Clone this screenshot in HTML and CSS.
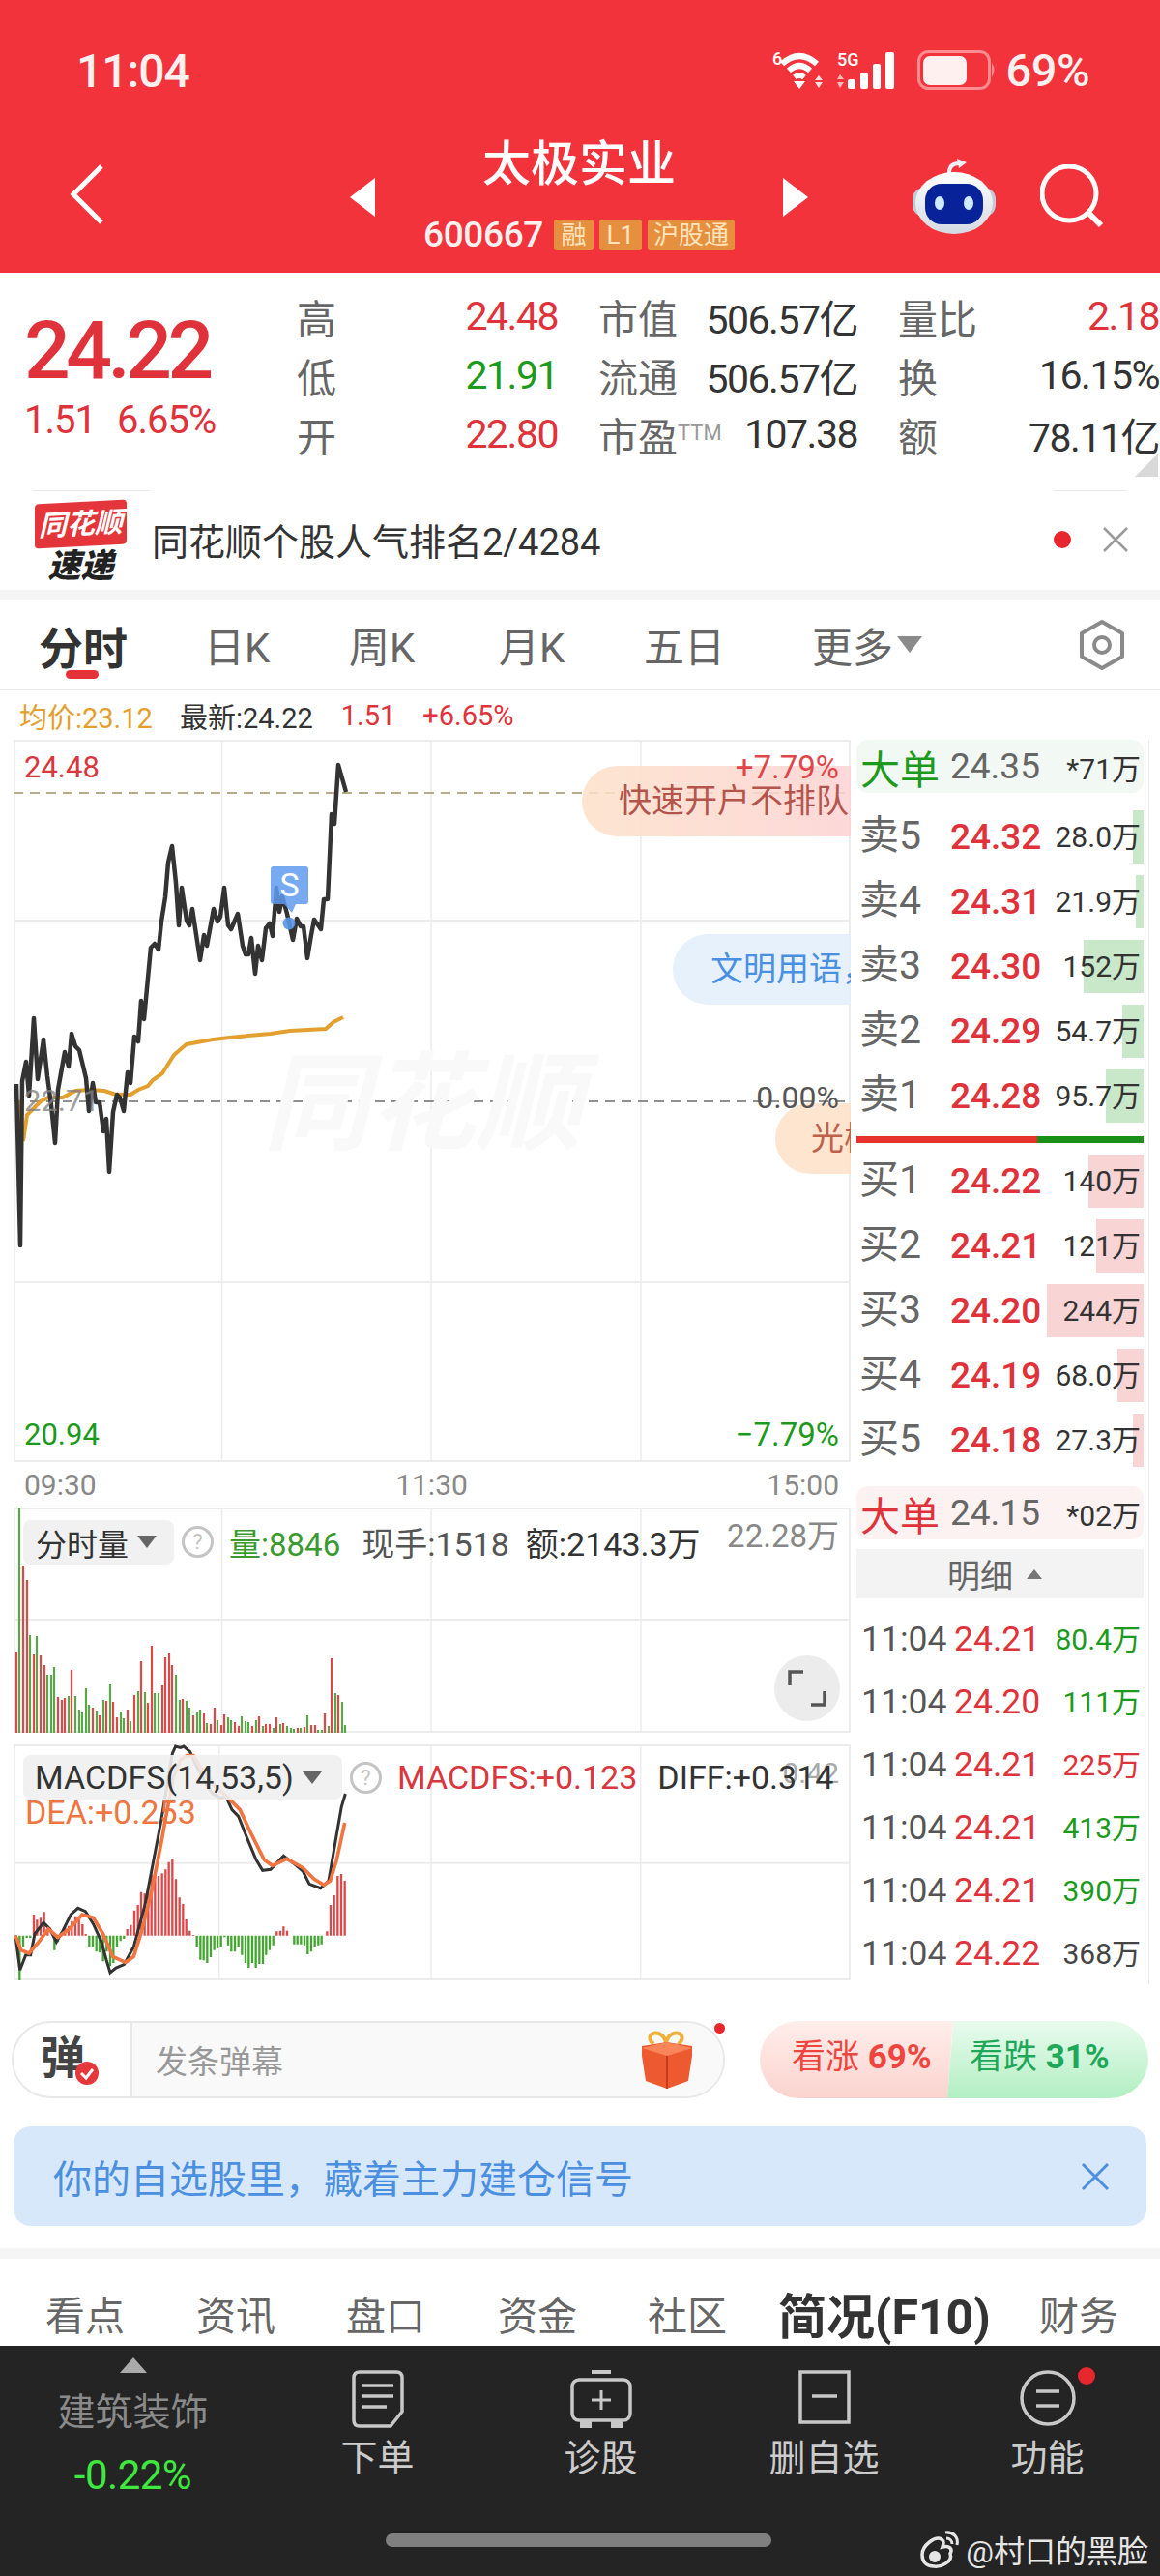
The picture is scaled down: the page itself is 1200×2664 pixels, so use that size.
FILE: index.html
```html
<!DOCTYPE html>
<html lang="zh">
<head>
    <meta charset="UTF-8">
    <title>太极实业</title>
    <link rel="stylesheet" href="styles.css">
</head>
<body>
<div class="page">
    <header class="header">
        <div class="status-bar">
            <span class="clock">11:04</span>
            <div class="status-icons">
                <svg class="wifi" width="56" height="44" viewBox="0 0 56 44">
                    <text x="0" y="16" class="tiny">6</text>
                    <path d="M10 15 Q28 -1 46 15M17 22 Q28 12 39 22M23 29 Q28 25 33 29" fill="none" stroke="#fff" stroke-width="6"/>
                    <path d="M22 33 L34 33 L28 41 Z" fill="#fff"/>
                    <path d="M48 27 L52 32 L44 32 Z M44 34 L52 34 L48 40 Z" fill="#fde0e0"/>
                </svg>
                <svg class="signal" width="66" height="44" viewBox="0 0 66 44">
                    <text x="0" y="17" class="tiny">5G</text>
                    <path d="M3 26 L7 31 L0 31 Z M0 34 L7 34 L3 40 Z" fill="#fbb"/>
                    <rect x="11" y="31" width="8" height="10" rx="2" fill="#fff"/>
                    <rect x="24" y="24" width="8" height="17" rx="2" fill="#fff"/>
                    <rect x="37" y="15" width="8" height="26" rx="2" fill="#fff"/>
                    <rect x="50" y="3" width="9" height="38" rx="2" fill="#fff"/>
                </svg>
                <svg class="battery" width="82" height="42" viewBox="0 0 82 42">
                    <rect x="1.5" y="1.5" width="73" height="38" rx="10" fill="none" stroke="#fb8c8f" stroke-width="3"/>
                    <rect x="6" y="6" width="45" height="30" rx="7" fill="#fff0f0"/>
                    <path d="M77 13 Q82 20 77 28 Z" fill="#fb8c8f"/>
                </svg>
                <span class="battery-text">69%</span>
            </div>
        </div>
        <div class="title-bar">
            <div class="title-left">
                <svg width="36" height="62" viewBox="0 0 36 62"><path d="M33 2 L4 31 L33 60" fill="none" stroke="#fff" stroke-width="5"/></svg>
            </div>
            <div class="title-center">
                <span class="tri-left"></span>
                <div class="stock-name">
                    <div class="name">太极实业</div>
                    <div class="code-line">
                        <span class="code">600667</span>
                        <span class="tag tag-rong">融</span>
                        <span class="tag tag-l1">L1</span>
                        <span class="tag tag-hu">沪股通</span>
                    </div>
                </div>
                <span class="tri-right"></span>
            </div>
            <div class="title-right">
                <svg width="86" height="78" viewBox="0 0 86 78">
                    <defs>
                        <linearGradient id="robotHead" x1="0" y1="0" x2="0" y2="1">
                            <stop offset="0" stop-color="#ffffff"/>
                            <stop offset="1" stop-color="#d4dae2"/>
                        </linearGradient>
                    </defs>
                    <path d="M38 15 Q38 5 48 5" fill="none" stroke="#eef0f4" stroke-width="4"/>
                    <path d="M46 0 L56 4 L48 10 Z" fill="#eef0f4"/>
                    <rect x="0" y="30" width="86" height="30" rx="12" fill="#c4cad3"/>
                    <ellipse cx="43" cy="46" rx="40" ry="32" fill="url(#robotHead)"/>
                    <rect x="13" y="26" width="60" height="42" rx="17" fill="#08229a"/>
                    <ellipse cx="28" cy="46" rx="5" ry="7" fill="#cdeaff"/>
                    <ellipse cx="58" cy="46" rx="5" ry="7" fill="#cdeaff"/>
                </svg>
                <svg width="66" height="66" viewBox="0 0 66 66"><circle cx="30" cy="30" r="28" fill="none" stroke="#fff" stroke-width="5"/><path d="M50 50 L63 63" stroke="#fff" stroke-width="6"/></svg>
            </div>
        </div>
    </header>

    <section class="quote">
        <div class="quote-price">
            <div class="last">24.22</div>
            <div class="change"><span>1.51</span><span>6.65%</span></div>
        </div>
        <div class="quote-table">
            <div class="cell"><span class="lab">高</span><span class="up">24.48</span></div>
            <div class="cell"><span class="lab">市值</span><span>506.57亿</span></div>
            <div class="cell"><span class="lab">量比</span><span class="up">2.18</span></div>
            <div class="cell"><span class="lab">低</span><span class="down">21.91</span></div>
            <div class="cell"><span class="lab">流通</span><span>506.57亿</span></div>
            <div class="cell"><span class="lab">换</span><span>16.15%</span></div>
            <div class="cell"><span class="lab">开</span><span class="up">22.80</span></div>
            <div class="cell"><span class="lab">市盈<sup>TTM</sup></span><span>107.38</span></div>
            <div class="cell"><span class="lab">额</span><span>78.11亿</span></div>
        </div>
        <span class="corner"></span>
    </section>

    <section class="news">
        <div class="news-logo">
            <span class="logo-top">同花顺</span>
            <span class="logo-bottom">速递</span>
        </div>
        <span class="news-text">同花顺个股人气排名2/4284</span>
        <span class="news-dot"></span>
        <svg class="news-close" width="28" height="26" viewBox="0 0 28 26"><path d="M2 1 L26 25 M26 1 L2 25" stroke="#9a9a9a" stroke-width="2.5"/></svg>
    </section>
    <div class="band"></div>

    <nav class="tabs">
        <span class="tab tab-on">分时</span>
        <span class="tab">日K</span>
        <span class="tab">周K</span>
        <span class="tab">月K</span>
        <span class="tab">五日</span>
        <span class="tab tab-more">更多<i class="caret"></i></span>
        <svg class="gear" width="54" height="54" viewBox="0 0 54 54">
            <path d="M27 3 L48 15 L48 39 L27 51 L6 39 L6 15 Z" fill="none" stroke="#8a8a8a" stroke-width="4" stroke-linejoin="round"/>
            <circle cx="27" cy="27" r="8" fill="none" stroke="#8a8a8a" stroke-width="4"/>
        </svg>
    </nav>

    <div class="info-row">
        <span class="avg">均价:23.12</span>
        <span class="latest">最新:24.22</span>
        <span class="up">1.51</span>
        <span class="up">+6.65%</span>
    </div>

    <div class="market">
        <div class="charts">
            <div class="price-chart">
                <svg class="price-svg" width="866" height="747" viewBox="14 765 866 747">
                    <rect x="15" y="766" width="864" height="745" fill="none" stroke="#ececec" stroke-width="2"/>
                    <path d="M229.5 765V1512M446 765V1512M663 765V1512" stroke="#ececec" stroke-width="1.5"/>
                    <path d="M14 952H880M14 1326H880" stroke="#ececec" stroke-width="2"/>
                    <path d="M14 820H880" stroke="#b9ab87" stroke-width="2" stroke-dasharray="10 7"/>
                    <path d="M14 1139H880" stroke="#8f8f8f" stroke-width="2" stroke-dasharray="10 7"/>
                    <polyline class="avg-line" points="19,1138 24,1180 28,1153 33,1148 42,1139 50,1135 65,1135 78,1128 93,1127 108,1128 120,1132 135,1132 143,1127 153,1123 158,1117 168,1110 173,1102 180,1091 188,1084 193,1080 220,1075 247,1072 280,1069 300,1066 337,1064 345,1057 355,1052"/>
                    <polyline class="price-line" points="17,1121 21,1288 23,1118 27,1098 30,1133 35,1053 39,1116 45,1075 49,1113 53,1143 57,1182 60,1127 67,1088 71,1103 74,1069 78,1082 82,1086 89,1115 92,1149 96,1120 99,1140 103,1140 107,1170 110,1157 113,1212 117,1150 121,1132 124,1135 128,1149 132,1109 135,1120 139,1072 143,1077 146,1035 149,1054 156,980 160,976 164,982 167,953 171,928 174,892 178,875 182,913 185,957 188,918 193,952 196,957 199,940 207,993 211,967 214,978 221,940 225,953 228,948 232,918 236,957 239,961 246,945 251,978 254,987 257,987 260,970 264,1007 267,978 271,993 275,960 279,955 282,968 286,918 289,943 292,927 297,945 303,972 307,950 311,958 314,958 318,991 322,967 325,951 332,961 335,930 339,930 343,842 346,852 350,791 358,819"/>
                    <circle cx="299" cy="955" r="6.5" fill="#5a96e8" fill-opacity="0.9"/>
                </svg>
                <span class="watermark">同花顺</span>
                <div class="s-mark">S</div>
                <div class="danmu danmu-a">快速开户不排队</div>
                <div class="danmu danmu-b">文明用语，</div>
                <div class="danmu danmu-c">光棒</div>
                <span class="axis high">24.48</span>
                <span class="axis low">20.94</span>
                <span class="axis mid">22.71</span>
                <span class="axis pct-high">+7.79%</span>
                <span class="axis pct-mid">0.00%</span>
                <span class="axis pct-low">−7.79%</span>
            </div>
            <div class="time-axis"><span>09:30</span><span>11:30</span><span>15:00</span></div>

            <div class="panel vol-panel">
                <svg width="866" height="233" viewBox="14 1559 866 233">
                    <rect x="15" y="1560" width="864" height="231" fill="none" stroke="#ececec" stroke-width="2"/>
                    <path d="M229.5 1559V1792M446 1559V1792M663 1559V1792" stroke="#ececec" stroke-width="1.5"/>
                    <path d="M14 1675H880" stroke="#ececec" stroke-width="2"/>
                    <path class="vol-up" d="M17 1792V1708M24 1792V1619M28 1792V1634M35 1792V1711M42 1792V1712M46 1792V1722M60 1792V1755M64 1792V1758M67 1792V1756M74 1792V1727M96 1792V1766M103 1792V1774M110 1792V1759M117 1792V1760M121 1792V1776M132 1792V1768M139 1792V1753M146 1792V1718M153 1792V1761M157 1792V1702M168 1792V1743M171 1792V1714M175 1792V1709M178 1792V1722M189 1792V1757M200 1792V1774M211 1792V1772M218 1792V1783M222 1792V1766M229 1792V1784M232 1792V1773M243 1792V1781M247 1792V1785M261 1792V1785M268 1792V1775M275 1792V1783M279 1792V1783M286 1792V1776M293 1792V1782M308 1792V1787M315 1792V1786M322 1792V1784M326 1792V1784M336 1792V1772M343 1792V1715M350 1792V1753"/>
                    <path class="vol-down" d="M20 1792V1559M31 1792V1691M38 1792V1692M49 1792V1732M53 1792V1732M56 1792V1724M71 1792V1754M78 1792V1754M82 1792V1768M85 1792V1771M89 1792V1746M92 1792V1763M100 1792V1769M107 1792V1758M114 1792V1742M125 1792V1770M128 1792V1777M135 1792V1780M143 1792V1749M150 1792V1750M160 1792V1751M164 1792V1751M182 1792V1732M186 1792V1758M193 1792V1759M196 1792V1766M204 1792V1771M207 1792V1768M214 1792V1782M225 1792V1779M236 1792V1776M239 1792V1779M250 1792V1775M254 1792V1780M257 1792V1781M265 1792V1779M272 1792V1785M283 1792V1787M290 1792V1783M297 1792V1785M301 1792V1787M304 1792V1788M311 1792V1787M318 1792V1774M329 1792V1789M333 1792V1789M340 1792V1785M347 1792V1751M354 1792V1760M357 1792V1784"/>
                </svg>
                <div class="panel-head">
                    <span class="pill pill-vol">分时量<i class="caret-small"></i></span>
                    <span class="help">?</span>
                    <span class="vol-green">量:8846</span>
                    <span class="vol-hand">现手:1518</span>
                    <span class="vol-amount">额:2143.3万</span>
                </div>
                <span class="vol-max">22.28万</span>
                <span class="expand">
                    <svg width="40" height="38" viewBox="0 0 40 38"><path d="M2 16 V2 H16 M38 22 V36 H24" fill="none" stroke="#555" stroke-width="3.5"/></svg>
                </span>
            </div>

            <div class="panel macd-panel">
                <svg width="866" height="244" viewBox="12 12 2598 732">
                    <rect x="15" y="15" width="2592" height="726" fill="none" stroke="#ececec" stroke-width="6"/>
                    <path d="M650 12V744M1308 12V744M1958 12V744" stroke="#ececec" stroke-width="4.5"/>
                    <path d="M12 380H2610" stroke="#ececec" stroke-width="6"/>
                    <path class="macd-up" d="M75 605V540M85 605V556M96 605V550M107 605V532M118 605V585M172 605V578M183 605V575M193 605V560M204 605V545M215 605V545M226 605V570M236 605V600M365 605V585M376 605V572M387 605V527M398 605V510M408 605V470M419 605V475M430 605V455M440 605V415M451 605V410M462 605V420M473 605V412M484 605V400M494 605V377M505 605V367M516 605V430M527 605V487M538 605V507M548 605V555M559 605V590M570 605V603M829 605V592M840 605V590M850 605V577M861 605V590M985 605V592M996 605V510M1007 605V480M1018 605V420M1029 605V414M1040 605V435"/>
                    <path class="macd-down" d="M31 605V745M42 605V640M53 605V612M64 605V612M139 605V650M150 605V625M247 605V640M258 605V640M269 605V655M279 605V658M290 605V685M301 605V655M312 605V700M322 605V690M333 605V640M344 605V622M355 605V615M581 605V640M592 605V680M602 605V682M613 605V690M624 605V672M635 605V650M645 605V645M656 605V640M667 605V610M678 605V635M688 605V655M699 605V655M710 605V640M721 605V665M732 605V690M742 605V705M753 605V690M764 605V705M775 605V693M786 605V693M796 605V665M807 605V650M818 605V635M883 605V632M893 605V632M904 605V632M915 605V635M925 605V663M936 605V655M947 605V640M958 605V635M968 605V632"/>
                    <polyline class="diff-line" points="18,605 32,712 50,665 65,665 78,600 105,565 125,585 145,625 165,590 190,540 212,520 235,530 260,570 285,625 300,680 312,720 330,705 355,695 385,640 420,510 445,380 470,250 490,130 505,40 515,18 530,22 540,18 560,35 580,80 610,135 630,165 655,178 672,175 690,215 710,235 740,310 765,370 785,403 810,400 850,358 880,380 910,405 930,445 965,458 990,435 1015,290 1030,205 1042,165"/>
                    <polyline class="dea-line" points="18,605 35,650 60,660 90,625 120,585 150,610 185,585 225,540 260,550 290,600 320,670 360,688 385,670 410,590 440,470 470,320 490,210 510,110 530,60 550,47 570,47 600,95 635,140 670,170 715,215 750,290 790,370 815,388 860,367 910,395 945,430 975,448 995,435 1015,370 1040,255"/>
                </svg>
                <span class="macd-axis">0.42</span>
                <div class="panel-head macd-head">
                    <span class="pill pill-macd">MACDFS(14,53,5)<i class="caret-small"></i></span>
                    <span class="help">?</span>
                    <span class="macd-val">MACDFS:+0.123</span>
                    <span class="diff-val">DIFF:+0.314</span>
                </div>
                <span class="dea-val">DEA:+0.253</span>
            </div>
        </div>

        <aside class="depth">
            <div class="big big-green"><b>大单</b><span class="big-price">24.35</span><span class="big-vol">*71万</span></div>
            <div class="book book-sell">
                <div class="level"><span class="level-name">卖5</span><span class="level-price">24.32</span><span class="level-vol"><i style="width:11px"></i><em>28.0万</em></span></div>
                <div class="level"><span class="level-name">卖4</span><span class="level-price">24.31</span><span class="level-vol"><i style="width:8px"></i><em>21.9万</em></span></div>
                <div class="level"><span class="level-name">卖3</span><span class="level-price">24.30</span><span class="level-vol"><i style="width:62px"></i><em>152万</em></span></div>
                <div class="level"><span class="level-name">卖2</span><span class="level-price">24.29</span><span class="level-vol"><i style="width:22px"></i><em>54.7万</em></span></div>
                <div class="level"><span class="level-name">卖1</span><span class="level-price">24.28</span><span class="level-vol"><i style="width:39px"></i><em>95.7万</em></span></div>
            </div>
            <div class="ratio"><span class="ratio-red"></span><span class="ratio-green"></span></div>
            <div class="book book-buy">
                <div class="level"><span class="level-name">买1</span><span class="level-price">24.22</span><span class="level-vol"><i style="width:57px"></i><em>140万</em></span></div>
                <div class="level"><span class="level-name">买2</span><span class="level-price">24.21</span><span class="level-vol"><i style="width:49px"></i><em>121万</em></span></div>
                <div class="level"><span class="level-name">买3</span><span class="level-price">24.20</span><span class="level-vol"><i style="width:100px"></i><em>244万</em></span></div>
                <div class="level"><span class="level-name">买4</span><span class="level-price">24.19</span><span class="level-vol"><i style="width:27px"></i><em>68.0万</em></span></div>
                <div class="level"><span class="level-name">买5</span><span class="level-price">24.18</span><span class="level-vol"><i style="width:11px"></i><em>27.3万</em></span></div>
            </div>
            <div class="big big-red"><b>大单</b><span class="big-price">24.15</span><span class="big-vol">*02万</span></div>
            <div class="detail-head">明细<i class="caret-up"></i></div>
            <div class="ticks">
                <div class="tick"><span class="tick-time">11:04</span><span class="tick-price">24.21</span><span class="tick-vol down">80.4万</span></div>
                <div class="tick"><span class="tick-time">11:04</span><span class="tick-price">24.20</span><span class="tick-vol down">111万</span></div>
                <div class="tick"><span class="tick-time">11:04</span><span class="tick-price">24.21</span><span class="tick-vol up">225万</span></div>
                <div class="tick"><span class="tick-time">11:04</span><span class="tick-price">24.21</span><span class="tick-vol down">413万</span></div>
                <div class="tick"><span class="tick-time">11:04</span><span class="tick-price">24.21</span><span class="tick-vol down">390万</span></div>
                <div class="tick"><span class="tick-time">11:04</span><span class="tick-price">24.22</span><span class="tick-vol">368万</span></div>
            </div>
        </aside>
    </div>

    <div class="danmu-row">
        <div class="danmu-input">
            <div class="danmu-badge"><b>弹</b>
                <svg class="danmu-check" width="24" height="24" viewBox="0 0 24 24"><circle cx="12" cy="12" r="12" fill="#e5383b"/><path d="M6 12 L11 17 L18 8" fill="none" stroke="#fff" stroke-width="3"/></svg>
            </div>
            <div class="danmu-field">
                <span>发条弹幕</span>
                <svg width="56" height="60" viewBox="0 0 56 60">
                    <path d="M14 14 C2 2 24 -4 27 13 C30 -4 52 2 40 14" fill="none" stroke="#eeb13a" stroke-width="4"/>
                    <path d="M2 16 L28 12 L54 16 L54 26 L50 52 L28 60 L6 52 L2 26 Z" fill="#ee5a30"/>
                    <path d="M2 18 L28 26 L54 18 L28 12 Z" fill="#f9855a"/>
                    <path d="M28 26 V60" stroke="#c93a1d" stroke-width="2"/>
                </svg>
            </div>
            <span class="danmu-dot"></span>
        </div>
        <div class="vote">
            <div class="vote-up">看涨 <b>69%</b></div>
            <div class="vote-down">看跌 <b>31%</b></div>
        </div>
    </div>

    <div class="banner">
        <span>你的自选股里，藏着主力建仓信号</span>
        <svg width="30" height="30" viewBox="0 0 30 30"><path d="M2 2 L28 28 M28 2 L2 28" stroke="#4a8fe0" stroke-width="3"/></svg>
    </div>
    <div class="band band-low"></div>

    <nav class="sub-tabs">
        <span>看点</span><span>资讯</span><span>盘口</span><span>资金</span><span>社区</span><span class="sub-on">简况(F10)</span><span>财务</span>
    </nav>

    <footer class="bottom">
        <div class="sector">
            <span class="sector-tri"></span>
            <span class="sector-name">建筑装饰</span>
            <span class="sector-pct">-0.22%</span>
        </div>
        <div class="action">
            <svg width="54" height="62" viewBox="0 0 54 62">
                <path d="M8 3 H46 Q52 3 52 9 V44 L40 59 H8 Q2 59 2 53 V9 Q2 3 8 3 Z" fill="none" stroke="#c8c8c8" stroke-width="3.5"/>
                <path d="M11 17 H43 M11 28 H43 M11 39 H36" stroke="#c8c8c8" stroke-width="3.5"/>
            </svg>
            <span>下单</span>
        </div>
        <div class="action">
            <svg width="64" height="62" viewBox="0 0 64 62">
                <path d="M22 3 H42" stroke="#c8c8c8" stroke-width="4"/>
                <rect x="2" y="11" width="60" height="42" rx="7" fill="none" stroke="#c8c8c8" stroke-width="3.5"/>
                <path d="M32 22 V42 M22 32 H42" stroke="#c8c8c8" stroke-width="3"/>
                <path d="M11 53 V60 H21 V53 M43 53 V60 H53 V53" fill="#c8c8c8" stroke="#c8c8c8" stroke-width="2"/>
            </svg>
            <span>诊股</span>
        </div>
        <div class="action">
            <svg width="54" height="62" viewBox="0 0 54 62">
                <rect x="2" y="3" width="50" height="52" fill="none" stroke="#c8c8c8" stroke-width="3.5"/>
                <path d="M14 28 H40" stroke="#c8c8c8" stroke-width="3.5"/>
            </svg>
            <span>删自选</span>
        </div>
        <div class="action action-more">
            <svg width="60" height="62" viewBox="0 0 60 62">
                <circle cx="30" cy="30" r="27" fill="none" stroke="#c8c8c8" stroke-width="3.5"/>
                <path d="M18 23 H42 M18 38 H42" stroke="#c8c8c8" stroke-width="3.5"/>
            </svg>
            <span>功能</span>
            <i class="action-dot"></i>
        </div>
        <span class="home-bar"></span>
        <div class="weibo">
            <svg width="44" height="44" viewBox="0 0 44 44">
                <path d="M4 28 C4 18 18 8 24 12 C27 14 26 17 25 20 C32 18 36 22 33 27 C36 35 24 41 16 40 C8 40 4 35 4 28 Z" fill="none" stroke="#e6e6e6" stroke-width="3.5"/>
                <circle cx="17" cy="30" r="6" fill="#e6e6e6"/>
                <path d="M28 5 C36 4 42 10 40 18 M29 11 C33 11 35 14 35 17" fill="none" stroke="#e6e6e6" stroke-width="3"/>
            </svg>
            <span>@村口的黑脸</span>
        </div>
    </footer>
</div>
</body>
</html>
```

FILE: styles.css
```css
* {
    box-sizing: border-box;
}

html, body {
    margin: 0;
    padding: 0;
    background: #fff;
}

body {
    font-family: Roboto, "Noto Sans CJK SC", sans-serif;
    color: #333;
}

.page {
    width: 1200px;
    height: 2664px;
    overflow: hidden;
    position: relative;
}

.up { color: #e0323a; }
.down { color: #1c9a1c; }

/* red header */
.header {
    height: 282px;
    background: #f2333b;
    color: #fff;
}

.status-bar {
    height: 146px;
    display: flex;
    align-items: center;
    justify-content: space-between;
    padding: 0 73px 0 79px;
}

.clock {
    font-size: 48px;
    font-weight: 500;
    letter-spacing: -1px;
    color: #fff0f0;
}

.status-icons {
    display: flex;
    align-items: center;
}

.status-icons .wifi { margin-right: 11px; }
.status-icons .signal { margin-right: 17px; }
.status-icons .battery { margin-right: 9px; }

.tiny {
    font-size: 18px;
    font-weight: 500;
    fill: #fff;
    font-family: Roboto, sans-serif;
}

.battery-text {
    font-size: 47px;
    font-weight: 500;
    color: #fff0f0;
    line-height: 46px;
    letter-spacing: -0.5px;
}

.title-bar {
    height: 136px;
    display: grid;
    grid-template-columns: 362px 474px 1fr;
    align-items: center;
}

.title-left {
    padding-left: 72px;
    margin-top: -22px;
}

.title-center {
    display: flex;
    align-items: center;
    justify-content: space-between;
}

.tri-left, .tri-right {
    width: 0;
    height: 0;
    margin-top: -20px;
    border-top: 20px solid transparent;
    border-bottom: 20px solid transparent;
}

.tri-left { border-right: 26px solid #fff; }
.tri-right { border-left: 26px solid #fff; }

.stock-name {
    text-align: center;
    margin-top: -29px;
}

.name {
    font-size: 50px;
    font-weight: 500;
    line-height: 60px;
}

.code-line {
    display: flex;
    align-items: center;
    justify-content: center;
    gap: 6px;
    margin-top: 27px;
}

.code {
    font-size: 37px;
    font-weight: 500;
    line-height: 32px;
    letter-spacing: -0.4px;
    margin-right: 5px;
    color: #fff0f0;
}

.tag {
    height: 32px;
    line-height: 32px;
    padding: 0 6px;
    font-size: 26px;
    background: #e6903f;
    color: #ffe3bd;
    border-radius: 3px;
    text-align: center;
}

.tag-rong { width: 41px; padding: 0; }
.tag-l1 { width: 44px; padding: 0; }
.tag-hu { width: 90px; padding: 0; }

.title-right {
    display: flex;
    align-items: center;
    gap: 46px;
    padding-left: 108px;
    margin-top: -22px;
}

/* quote block */
.quote {
    height: 223px;
    display: flex;
    position: relative;
    padding-top: 14px;
}

.quote-price {
    width: 307px;
    padding-left: 25px;
}

.last {
    font-size: 84px;
    line-height: 84px;
    margin-top: 25px;
    font-weight: 500;
    color: #e0323a;
    letter-spacing: -4.5px;
}

.change {
    display: flex;
    gap: 22px;
    margin-top: 8px;
    font-size: 40px;
    line-height: 44px;
    letter-spacing: -1px;
    color: #e0323a;
}

.quote-table {
    display: grid;
    grid-template-columns: 270px 268px 270px;
    column-gap: 42px;
    grid-auto-rows: 61px;
    font-size: 41px;
    letter-spacing: -1.5px;
}

.cell {
    display: flex;
    align-items: center;
    justify-content: space-between;
}

.lab {
    font-size: 41px;
    letter-spacing: 0;
    color: #666;
}

.lab sup {
    font-size: 22px;
    color: #999;
    line-height: 0;
    vertical-align: 12px;
}

.corner {
    position: absolute;
    right: 2px;
    bottom: 12px;
    width: 0;
    height: 0;
    border-left: 24px solid transparent;
    border-bottom: 24px solid #d9d9d9;
}

/* news strip */
.news {
    height: 105px;
    display: flex;
    align-items: center;
    position: relative;
    padding-left: 36px;
}

.news::before, .news::after {
    content: "";
    position: absolute;
    top: 2px;
    height: 1px;
    background: #e8e8e8;
}

.news::before { left: 34px; width: 121px; }
.news::after { left: 1090px; width: 75px; }

.news-logo {
    width: 95px;
    margin-right: 26px;
    display: flex;
    flex-direction: column;
    align-items: center;
    margin-top: 6px;
}

.logo-top {
    display: block;
    width: 95px;
    height: 46px;
    line-height: 46px;
    text-align: center;
    background: #e3353a;
    color: #fff;
    font-size: 29px;
    font-weight: 700;
    font-style: italic;
    border-radius: 4px;
    transform: skewY(-3deg);
}

.logo-bottom {
    font-size: 34px;
    line-height: 36px;
    font-weight: 900;
    font-style: italic;
    color: #222;
    margin-top: 2px;
}

.news-text {
    font-size: 38px;
    color: #333;
    flex: 1;
}

.news-dot {
    width: 18px;
    height: 18px;
    border-radius: 50%;
    background: #e8262d;
    margin-right: 32px;
}

.news-close {
    margin-right: 32px;
}

.band {
    height: 10px;
    background: #f5f5f5;
}

/* period tabs */
.tabs {
    height: 94px;
    display: grid;
    grid-template-columns: 171px 150px 155px 150px 174px 1fr auto;
    align-items: center;
    padding: 0 33px 0 40px;
    position: relative;
    border-bottom: 1px solid #ececec;
}

.tab {
    font-size: 42px;
    color: #666;
}

.tab-on {
    font-size: 46px;
    font-weight: 700;
    color: #333;
    position: relative;
}

.tab-on::after {
    content: "";
    position: absolute;
    left: 28px;
    top: 59px;
    width: 34px;
    height: 9px;
    border-radius: 5px;
    background: #e53238;
}

.tab-more {
    display: flex;
    align-items: center;
}

.caret {
    width: 0;
    height: 0;
    margin-left: 4px;
    border-left: 13px solid transparent;
    border-right: 13px solid transparent;
    border-top: 17px solid #8a8a8a;
}

.info-row {
    height: 51px;
    display: flex;
    align-items: center;
    padding-left: 20px;
    gap: 28px;
    font-size: 29px;
}

.info-row .avg { color: #e3a02f; }
.info-row .latest { color: #333; margin-right: 1px; }

/* charts */
.market {
    display: flex;
    align-items: flex-start;
    height: 1325px;
}

.charts {
    width: 866px;
    margin-left: 14px;
    flex: none;
}

.price-chart {
    position: relative;
    width: 866px;
    height: 747px;
    overflow: hidden;
}

.price-chart svg,
.panel svg {
    display: block;
}

.price-line {
    fill: none;
    stroke: #333;
    stroke-width: 4.5;
    stroke-linejoin: round;
}

.avg-line {
    fill: none;
    stroke: #e3a02f;
    stroke-width: 4;
}

.watermark {
    position: absolute;
    left: 258px;
    top: 318px;
    font-size: 110px;
    line-height: 120px;
    font-weight: 700;
    font-style: italic;
    color: #f9f9f9;
}

.s-mark {
    position: absolute;
    left: 266px;
    top: 131px;
    width: 39px;
    height: 39px;
    line-height: 39px;
    text-align: center;
    font-size: 34px;
    color: #fff;
    background: rgba(95, 155, 238, 0.85);
    border-radius: 3px;
}

.s-mark::after {
    content: "";
    position: absolute;
    left: 14px;
    top: 39px;
    border-top: 9px solid rgba(95, 155, 238, 0.85);
    border-left: 8px solid transparent;
    border-right: 4px solid transparent;
}

.danmu {
    position: absolute;
    height: 73px;
    line-height: 73px;
    font-size: 34px;
    white-space: nowrap;
    overflow: hidden;
    border-radius: 37px 0 0 37px;
    right: 0;
}

.danmu-a {
    top: 27px;
    width: 278px;
    padding-left: 38px;
    color: #b3554d;
    background: linear-gradient(90deg, rgba(253, 224, 200, 0.85), rgba(252, 210, 210, 0.85));
}

.danmu-b {
    top: 201px;
    width: 184px;
    padding-left: 39px;
    color: #4a90e2;
    background: rgba(226, 238, 252, 0.85);
}

.danmu-c {
    top: 376px;
    width: 78px;
    padding-left: 37px;
    color: #c0604a;
    background: rgba(253, 224, 200, 0.85);
}

.axis {
    position: absolute;
    font-size: 31px;
    line-height: 36px;
}

.high { left: 11px; top: 11px; color: #d9363e; }
.low { left: 11px; top: 701px; color: #1c9a1c; }
.mid { left: 11px; top: 356px; color: rgba(130, 130, 130, 0.8); }
.pct-high { right: 12px; top: 11px; color: #e0454a; font-size: 33px; }
.pct-mid { right: 12px; top: 352px; color: #555; font-size: 32px; }
.pct-low { right: 12px; top: 701px; color: #1c9a1c; font-size: 33px; }

.time-axis {
    height: 47px;
    display: flex;
    justify-content: space-between;
    align-items: center;
    padding: 0 12px 0 11px;
    font-size: 30px;
    color: #888;
}

.panel {
    position: relative;
}

.vol-panel {
    height: 233px;
    margin-bottom: 12px;
}

.vol-up, .macd-up {
    fill: none;
    stroke: #db4a4a;
}

.vol-down, .macd-down {
    fill: none;
    stroke: #5aa64a;
}

.vol-up, .vol-down {
    stroke-width: 2.2;
}

.macd-up, .macd-down {
    stroke-width: 7;
}

.macd-down {
    stroke: #45a532;
}

.diff-line {
    fill: none;
    stroke: #333;
    stroke-width: 9;
}

.dea-line {
    fill: none;
    stroke: #f07540;
    stroke-width: 11;
}

.panel-head {
    position: absolute;
    left: 10px;
    top: 11px;
    display: flex;
    align-items: center;
    font-size: 33px;
    white-space: nowrap;
}

.pill {
    display: flex;
    align-items: center;
    height: 46px;
    padding-left: 13px;
    border-radius: 8px;
    background: rgba(240, 240, 240, 0.9);
    color: #333;
    font-size: 32px;
}

.pill-vol { width: 156px; }

.pill-macd {
    width: 330px;
    padding-left: 12px;
    font-size: 34px;
}

.caret-small {
    width: 0;
    height: 0;
    margin-left: 9px;
    border-left: 10px solid transparent;
    border-right: 10px solid transparent;
    border-top: 13px solid #666;
}

.help {
    width: 33px;
    height: 33px;
    margin-left: 8px;
    border: 3px solid #c4c4c4;
    border-radius: 50%;
    text-align: center;
    line-height: 27px;
    font-size: 22px;
    color: #c4c4c4;
}

.vol-green { color: #3a9a2f; margin-left: 16px; }
.vol-hand { color: #555; margin-left: 22px; font-size: 34px; }
.vol-amount { color: #333; margin-left: 17px; font-size: 34px; }

.vol-max {
    position: absolute;
    right: 12px;
    top: 3px;
    font-size: 33px;
    color: #888;
}

.expand {
    position: absolute;
    left: 787px;
    top: 153px;
    width: 68px;
    height: 68px;
    border-radius: 50%;
    background: #ececec;
    display: flex;
    align-items: center;
    justify-content: center;
}

.macd-panel {
    height: 244px;
}

.macd-head {
    top: 11px;
}

.macd-val { color: #d9363e; margin-left: 16px; font-size: 34px; }
.diff-val { color: #333; margin-left: 21px; font-size: 34px; }

.macd-axis {
    position: absolute;
    right: 12px;
    top: 12px;
    font-size: 30px;
    color: #aaa;
}

.dea-val {
    position: absolute;
    left: 12px;
    top: 50px;
    font-size: 34px;
    color: #f07540;
}

/* order book */
.depth {
    width: 303px;
    margin-left: 6px;
    padding-right: 5px;
    border-right: 1px solid #ececec;
    flex: none;
}

.big {
    height: 55px;
    display: flex;
    align-items: center;
    padding-left: 4px;
    border-radius: 12px;
    position: relative;
    font-size: 37px;
    color: #666;
}

.big b {
    font-size: 41px;
    font-weight: 400;
    width: 93px;
}

.big-price {
    width: 94px;
}

.big-vol {
    position: absolute;
    right: 3px;
    font-size: 30px;
    color: #333;
}

.big-green { background: #f2f8f3; }
.big-green b { color: #1c9a1c; }
.big-red { background: #fdf2f2; margin-top: 14px; }
.big-red b { color: #e0323a; }

.book-sell {
    margin-top: 12px;
}

.level {
    height: 67px;
    display: flex;
    align-items: center;
    padding-left: 3px;
}

.level-name {
    width: 94px;
    font-size: 41px;
    line-height: 50px;
    margin-top: -4px;
    color: #666;
}

.level-price {
    font-size: 37px;
    font-weight: 500;
    color: #e0323a;
}

.level-vol {
    flex: 1;
    align-self: center;
    height: 55px;
    line-height: 55px;
    position: relative;
    text-align: right;
    font-size: 30px;
    color: #333;
}

.level-vol i {
    position: absolute;
    right: 0;
    top: 0;
    height: 55px;
}

.level-vol em {
    position: relative;
    font-style: normal;
    padding-right: 3px;
}

.book-sell .level-vol i { background: #c9e8c9; }
.book-buy .level-vol i { background: #f8d4d4; }

.ratio {
    display: flex;
    height: 7px;
    margin: 8px 0 6px;
}

.ratio-red { width: 187px; background: #e5322d; }
.ratio-green { flex: 1; background: #1a8f1a; }

.detail-head {
    height: 51px;
    margin-top: 10px;
    background: #f3f3f3;
    display: flex;
    align-items: center;
    padding-left: 94px;
    font-size: 34px;
    color: #666;
}

.caret-up {
    width: 0;
    height: 0;
    margin-left: 14px;
    border-left: 8px solid transparent;
    border-right: 8px solid transparent;
    border-bottom: 10px solid #777;
}

.ticks {
    margin-top: 9px;
}

.tick {
    height: 65px;
    display: flex;
    align-items: center;
    padding-left: 5px;
    font-size: 35.5px;
}

.tick-time {
    width: 96px;
    color: #555;
}

.tick-price {
    color: #e0323a;
}

.tick-vol {
    flex: 1;
    margin-top: -3px;
    text-align: right;
    font-size: 30px;
    padding-right: 3px;
}

.tick-vol:not(.up):not(.down) {
    color: #444;
}

/* danmu bar */
.danmu-row {
    height: 109px;
    display: flex;
    padding: 0 12px;
}

.danmu-input {
    width: 738px;
    height: 80px;
    display: flex;
    border: 2px solid #e8e8e8;
    border-radius: 40px;
    position: relative;
}

.danmu-badge {
    width: 123px;
    display: flex;
    align-items: center;
    padding-left: 28px;
    position: relative;
    border-right: 2px solid #e8e8e8;
}

.danmu-badge b {
    font-size: 46px;
    line-height: 60px;
    margin-top: -4px;
    font-weight: 700;
    color: #444;
}

.danmu-check {
    position: absolute;
    left: 64px;
    top: 40px;
}

.danmu-field {
    flex: 1;
    display: flex;
    align-items: center;
    justify-content: space-between;
    padding: 0 30px 0 24px;
    background: #f9f9f9;
    border-radius: 0 38px 38px 0;
    font-size: 33px;
    color: #999;
}

.danmu-dot {
    position: absolute;
    right: -2px;
    top: 0;
    width: 11px;
    height: 11px;
    border-radius: 50%;
    background: #e8262d;
}

.vote {
    width: 402px;
    height: 80px;
    margin-left: 36px;
    display: flex;
    border-radius: 40px;
    overflow: hidden;
    font-size: 35px;
}

.vote-up, .vote-down {
    height: 80px;
    line-height: 76px;
    white-space: nowrap;
}

.vote b {
    font-weight: 700;
}

.vote-up {
    width: 200px;
    padding-left: 33px;
    color: #f0453f;
    background: linear-gradient(180deg, #ffeeeb, #fbd3ce);
    clip-path: polygon(0 0, 100% 0, 97% 100%, 0 100%);
}

.vote-down {
    width: 208px;
    margin-left: -6px;
    padding-left: 23px;
    color: #1fa85a;
    background: linear-gradient(180deg, #e9fbee, #b2efc2);
    clip-path: polygon(3% 0, 100% 0, 100% 100%, 0 100%);
}

.banner {
    height: 103px;
    margin: 0 14px;
    padding: 0 38px 0 41px;
    background: #d8e8fb;
    border-radius: 18px;
    display: flex;
    align-items: center;
    justify-content: space-between;
    font-size: 40px;
    color: #4a8fe0;
}

.band-low {
    margin-top: 23px;
    height: 11px;
}

/* bottom tabs */
.sub-tabs {
    height: 90px;
    display: grid;
    grid-template-columns: 156px 155px 157px 155px 135px 270px auto;
    align-items: center;
    padding: 20px 0 0 47px;
    font-size: 41px;
    color: #666;
    white-space: nowrap;
}

.sub-on {
    font-size: 50px;
    font-weight: 700;
    color: #333;
}

.bottom {
    position: absolute;
    left: 0;
    top: 2426px;
    width: 1200px;
    height: 238px;
    background: #242424;
    display: grid;
    grid-template-columns: 275px repeat(4, 231px);
}

.sector {
    display: flex;
    flex-direction: column;
    align-items: center;
    padding-top: 12px;
}

.sector-tri {
    width: 0;
    height: 0;
    border-left: 14px solid transparent;
    border-right: 14px solid transparent;
    border-bottom: 16px solid #aaa;
}

.sector-name {
    margin-top: 14px;
    font-size: 39px;
    line-height: 54px;
    color: #8a8a8a;
}

.sector-pct {
    margin-top: 10px;
    font-size: 42px;
    line-height: 56px;
    letter-spacing: -0.5px;
    color: #3ee83e;
}

.action {
    display: flex;
    flex-direction: column;
    align-items: center;
    padding-top: 24px;
    position: relative;
    font-size: 38px;
    line-height: 48px;
    color: #ccc;
}

.action span {
    margin-top: 6px;
}

.action-dot {
    position: absolute;
    left: 147px;
    top: 22px;
    width: 18px;
    height: 18px;
    border-radius: 50%;
    background: #e8262d;
}

.home-bar {
    position: absolute;
    left: 399px;
    top: 194px;
    width: 399px;
    height: 14px;
    border-radius: 7px;
    background: #808080;
}

.weibo {
    position: absolute;
    right: 12px;
    top: 187px;
    display: flex;
    align-items: center;
    gap: 5px;
    font-size: 32px;
    color: #e6e6e6;
}
```
